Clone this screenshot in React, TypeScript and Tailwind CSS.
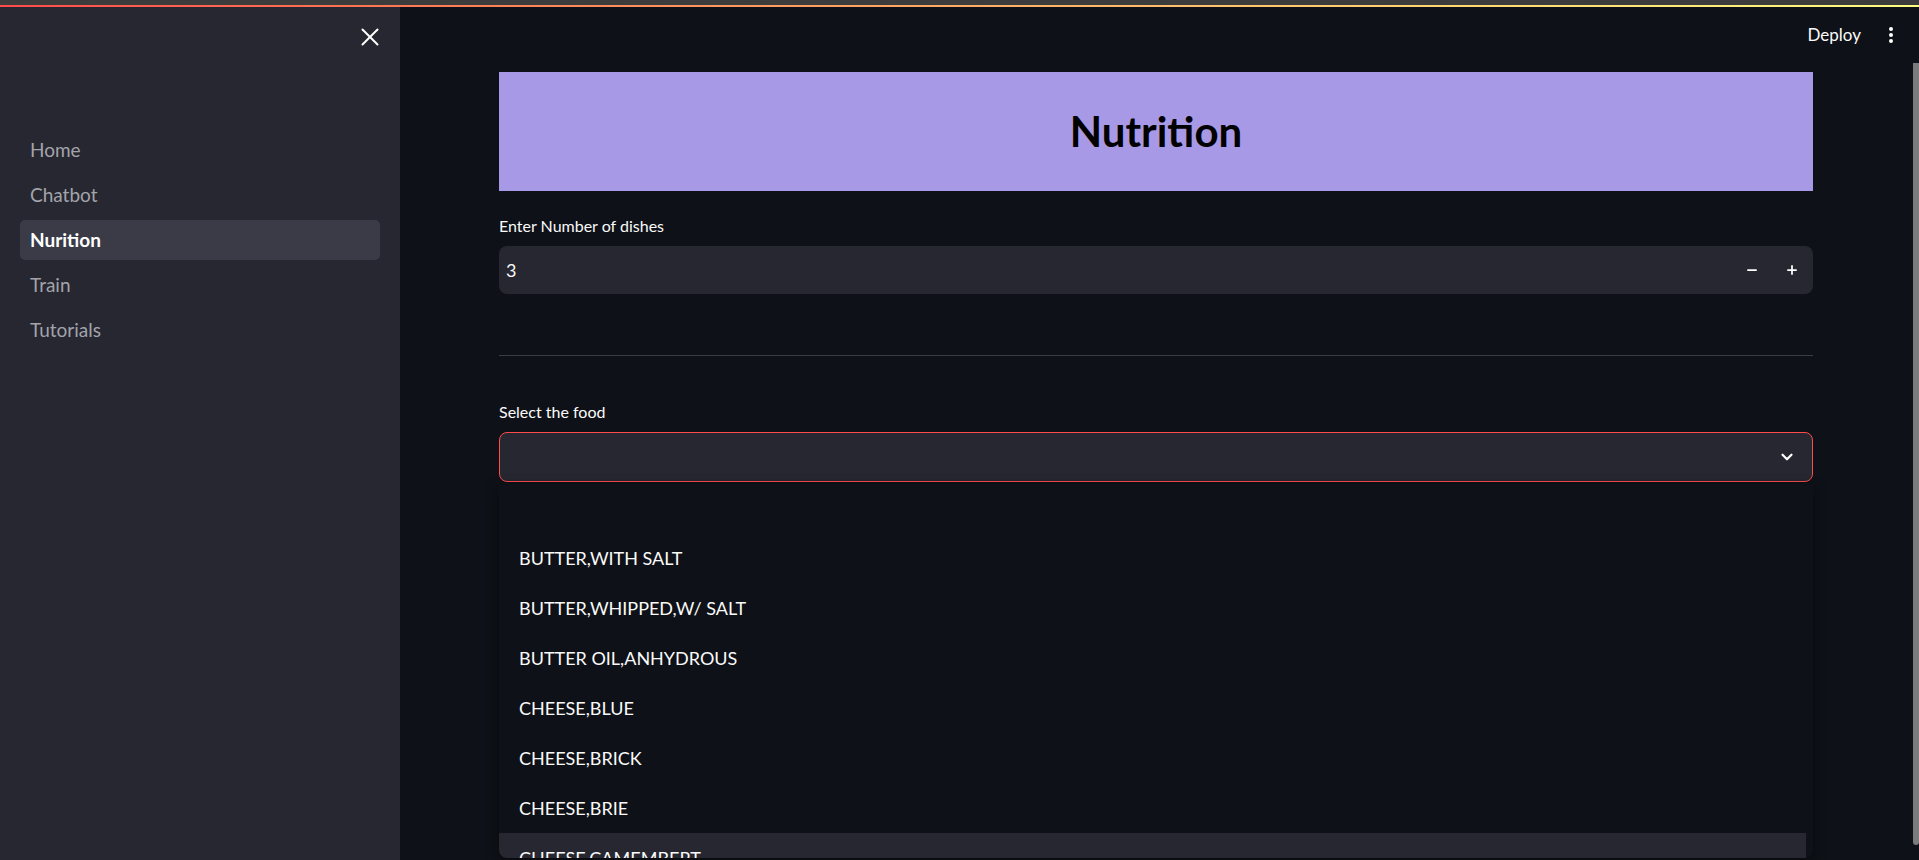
import { X, ChevronDown, Minus, Plus } from "lucide-react";

const navItems = ["Home", "Chatbot", "Nurition", "Train", "Tutorials"];

const foods = [
  "BUTTER,WITH SALT",
  "BUTTER,WHIPPED,W/ SALT",
  "BUTTER OIL,ANHYDROUS",
  "CHEESE,BLUE",
  "CHEESE,BRICK",
  "CHEESE,BRIE",
  "CHEESE,CAMEMBERT",
];

export default function App() {
  return (
    <div
      className="flex h-[860px] w-full flex-col overflow-hidden bg-[#0e1117] text-[#fafafa]"
      style={{ fontFamily: "Lato, 'Noto Sans', sans-serif" }}
    >
      {/* browser strip + streamlit decoration */}
      <div className="h-[5px] bg-[#3c3c3c]" />
      <div className="h-[2px] bg-gradient-to-r from-[#ff4b4b] to-[#fffd80]" />

      <div className="flex flex-1 min-h-0">
        {/* Sidebar */}
        <aside className="w-[400px] shrink-0 bg-[#262730] px-[20px]">
          <div className="-mr-[5px] flex justify-end pt-[15px]">
            <X size={30} strokeWidth={1.6} className="text-white" />
          </div>
          <ul className="mt-[78px] flex flex-col gap-[5px]">
            {navItems.map((item) => (
              <li
                key={item}
                className={
                  item === "Nurition"
                    ? "flex h-[40px] items-center rounded-[5px] bg-[#3a3b47] px-[10px] text-[19px] font-bold text-white"
                    : "flex h-[40px] items-center px-[10px] text-[19px] text-[#a3a4ab]"
                }
              >
                {item}
              </li>
            ))}
          </ul>
        </aside>

        {/* Main */}
        <main className="flex min-w-0 flex-1">
          <div className="flex min-w-0 flex-1 flex-col">
            <header className="flex h-[56px] items-center justify-end gap-[28px] pr-[20px]">
              <span className="text-[17px]">Deploy</span>
              <div className="flex flex-col gap-[2px]">
                <span className="h-[4px] w-[4px] rounded-full bg-white" />
                <span className="h-[4px] w-[4px] rounded-full bg-white" />
                <span className="h-[4px] w-[4px] rounded-full bg-white" />
              </div>
            </header>

            <div className="mt-[9px] flex flex-col pl-[99px] pr-[100px]">
              <div className="flex h-[119px] items-center justify-center bg-[#a799e6]">
                <h1 className="text-[42px] font-bold text-black">Nutrition</h1>
              </div>

              <label className="mt-[24px] text-[16px] leading-[21px]">Enter Number of dishes</label>
              <div className="mt-[10px] flex h-[48px] items-center rounded-[8px] bg-[#262730] pl-[7px] pr-[14px]">
                <span className="flex-1 text-[18px]">3</span>
                <Minus size={14} strokeWidth={3} className="text-white" />
                <Plus size={14} strokeWidth={3} className="ml-[26px] text-white" />
              </div>

              <div className="mt-[61px] h-px bg-[#3b3c44]" />

              <label className="mt-[45px] text-[16px] leading-[21px]">Select the food</label>
              <div className="mt-[10px] flex h-[50px] items-center justify-end rounded-[8px] border border-[#ff4b4b] bg-[#262730] pr-[16px]">
                <ChevronDown size={18} strokeWidth={3} className="text-white" />
              </div>

              <div className="mt-[2px] flex h-[374px] flex-col overflow-hidden rounded-b-[8px] bg-[#0e1117] pt-[49px] pr-[7px] shadow-[0_4px_14px_rgba(0,0,0,0.45)]">
                {foods.map((food, i) => (
                  <div
                    key={food}
                    className={
                      i === 6
                        ? "flex h-[50px] shrink-0 items-center bg-[#262730] pl-[20px] text-[18px]"
                        : "flex h-[50px] shrink-0 items-center pl-[20px] text-[18px]"
                    }
                  >
                    {food}
                  </div>
                ))}
              </div>
            </div>
          </div>

          {/* scrollbar */}
          <div className="w-[6px] shrink-0 pt-[56px] pb-[15px]">
            <div className="h-full rounded-b-[3px] bg-[#7b7b7d]" />
          </div>
        </main>
      </div>
    </div>
  );
}
